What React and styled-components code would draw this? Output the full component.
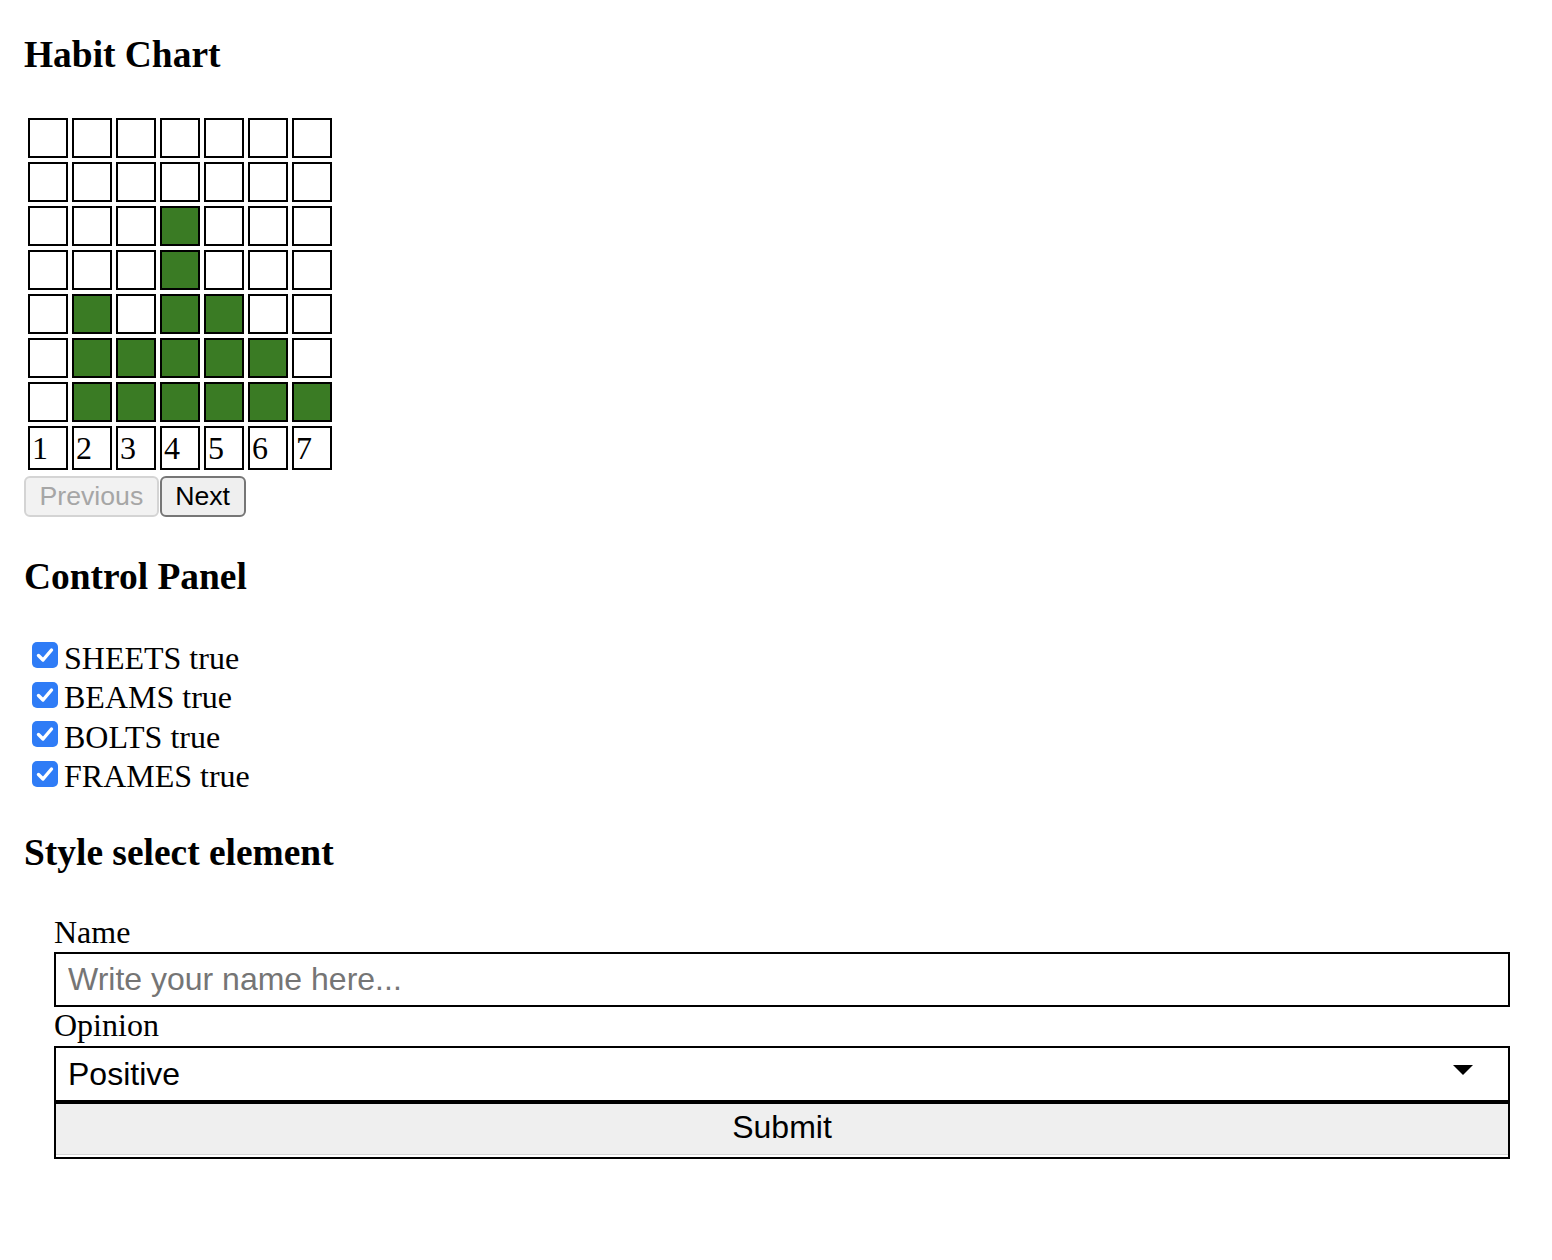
import React from "react";
import styled, { createGlobalStyle } from "styled-components";

const heights = [0, 3, 2, 5, 3, 2, 1];
const ROWS = 7;
const controls = ["SHEETS", "BEAMS", "BOLTS", "FRAMES"];

const GlobalStyle = createGlobalStyle`
  html, body {
    margin: 0;
    background: #fff;
  }
  body {
    font-family: "Liberation Serif", "Times New Roman", serif;
    font-size: 32px;
    color: #000;
  }
`;

const App = () => {
  const cells = [];
  for (let r = 0; r < ROWS; r++) {
    heights.forEach((h, c) => {
      cells.push(<Cell key={r + "-" + c} filled={ROWS - 1 - r < h} />);
    });
  }

  return (
    <Page>
      <GlobalStyle />
      <Heading>Habit Chart</Heading>
      <Chart>
        {cells}
        {heights.map((h, c) => (
          <DayCell key={"d" + c}>{c + 1}</DayCell>
        ))}
      </Chart>
      <Pager>
        <PageButton disabled>Previous</PageButton>
        <PageButton>Next</PageButton>
      </Pager>

      <Heading>Control Panel</Heading>
      <ControlList>
        {controls.map(name => (
          <ControlRow key={name}>
            <CheckBox>
              <svg width="18" height="16" viewBox="0 0 18 16">
                <path
                  d="M2.5 8.5 L7 13 L15.5 3"
                  fill="none"
                  stroke="#fff"
                  strokeWidth="3.4"
                  strokeLinecap="round"
                  strokeLinejoin="round"
                />
              </svg>
            </CheckBox>
            <ControlLabel>{name} true</ControlLabel>
          </ControlRow>
        ))}
      </ControlList>

      <Heading>Style select element</Heading>
      <Form onSubmit={e => e.preventDefault()}>
        <FieldLabel htmlFor="name">Name</FieldLabel>
        <TextInput id="name" type="text" placeholder="Write your name here..." />
        <FieldLabel htmlFor="opinion">Opinion</FieldLabel>
        <SelectWrap>
          <Select id="opinion" defaultValue="positive">
            <option value="positive">Positive</option>
            <option value="negative">Negative</option>
          </Select>
          <Arrow width="20" height="10" viewBox="0 0 20 10">
            <path d="M0 0 H20 L10 10 Z" fill="#000" />
          </Arrow>
        </SelectWrap>
        <SubmitButton type="submit">Submit</SubmitButton>
      </Form>
    </Page>
  );
};

const Page = styled.div`
  padding: 33px 24px 60px;
`;

const Heading = styled.h3`
  font-family: "Liberation Serif", "Times New Roman", serif;
  font-size: 37.44px;
  font-weight: bold;
  line-height: 43px;
  margin: 37.44px 0;
  &:first-child {
    margin-top: 0;
  }
`;

const Chart = styled.div`
  display: grid;
  grid-template-columns: repeat(7, 40px);
  grid-template-rows: repeat(7, 40px) 44px;
  gap: 4px;
  padding: 5px 4px 4px;
  width: max-content;
`;

const Cell = styled.div`
  box-sizing: border-box;
  border: 2px solid #000;
  background: ${p => (p.filled ? "#3a7b24" : "#fff")};
`;

const DayCell = styled.div`
  box-sizing: border-box;
  border: 2px solid #000;
  padding: 0 2px;
  font-size: 32px;
  line-height: 40px;
  display: flex;
  align-items: center;
`;

const Pager = styled.div`
  display: flex;
  gap: 1px;
  margin-top: 2px;
`;

const PageButton = styled.button`
  box-sizing: border-box;
  height: 41px;
  padding: 0 13.5px;
  font-family: "Liberation Sans", Arial, sans-serif;
  font-size: 26.67px;
  color: ${p => (p.disabled ? "#a6a6a6" : "#000")};
  background: ${p => (p.disabled ? "#f2f2f2" : "#efefef")};
  border: 2px solid ${p => (p.disabled ? "#d4d4d4" : "#767676")};
  border-radius: 6px;
`;

const ControlList = styled.div`
  display: flex;
  flex-direction: column;
`;

const ControlRow = styled.div`
  display: flex;
  align-items: flex-start;
  height: 39.5px;
`;

const CheckBox = styled.span`
  box-sizing: border-box;
  width: 26px;
  height: 26px;
  margin: 7px 6px 0 8px;
  border-radius: 5px;
  background: #2f7cf6;
  display: flex;
  align-items: center;
  justify-content: center;
`;

const ControlLabel = styled.span`
  font-size: 32px;
  line-height: 32px;
  margin-top: 6.5px;
`;

const Form = styled.form`
  display: flex;
  flex-direction: column;
  padding: 3px 18px 0 30px;
`;

const FieldLabel = styled.label`
  font-size: 32px;
  line-height: 36.8px;
`;

const TextInput = styled.input`
  box-sizing: border-box;
  height: 55px;
  margin: 1.4px 0 0;
  padding: 0 12px;
  border: 2px solid #000;
  border-radius: 0;
  font-family: "Liberation Sans", Arial, sans-serif;
  font-size: 32px;
  outline: none;
  &::placeholder {
    color: #757575;
  }
`;

const SelectWrap = styled.div`
  position: relative;
  margin-top: 2px;
`;

const Select = styled.select`
  box-sizing: border-box;
  width: 100%;
  height: 56px;
  margin: 0;
  padding: 0 12px;
  appearance: none;
  border: 2px solid #000;
  border-radius: 0;
  background: #fff;
  font-family: "Liberation Sans", Arial, sans-serif;
  font-size: 32px;
  color: #000;
  outline: none;
`;

const Arrow = styled.svg`
  position: absolute;
  right: 37px;
  top: 19px;
  pointer-events: none;
`;

const SubmitButton = styled.button`
  box-sizing: border-box;
  height: 57px;
  padding: 0 0 6px;
  border: 2px solid #000;
  border-radius: 0;
  background: #efefef;
  box-shadow: inset 0 -2px 0 #fff, inset 0 -3px 0 #d6d6d6;
  font-family: "Liberation Sans", Arial, sans-serif;
  font-size: 32px;
  color: #000;
`;

export default App;
